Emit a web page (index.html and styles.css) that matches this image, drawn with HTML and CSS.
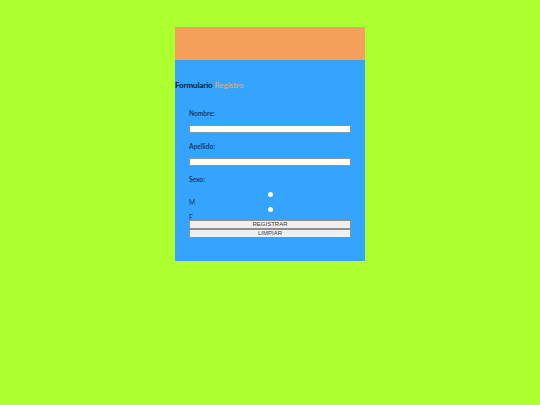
FILE: index.html
```html
<!DOCTYPE html>
<html lang="es">
<head>
<meta charset="utf-8">
<title>Formulario Registro</title>
<link rel="stylesheet" href="styles.css">
</head>
<body>
<div class="card">
  <div class="card-head"></div>
  <div class="card-body">
    <h1 class="title">Formulario <span class="accent">Registro</span></h1>
    <form class="form">
      <label class="lbl lbl-first">Nombre:</label>
      <input class="field" type="text">
      <label class="lbl">Apellido:</label>
      <input class="field" type="text">
      <label class="lbl">Sexo:</label>
      <span class="radio"></span>
      <span class="opt">M</span>
      <span class="radio"></span>
      <span class="opt opt-last">F</span>
      <button type="button" class="btn">REGISTRAR</button>
      <button type="button" class="btn">LIMPIAR</button>
    </form>
  </div>
</div>
</body>
</html>
```

FILE: styles.css
```css
html, body {
  margin: 0;
  padding: 0;
  background: #adff2f;
  height: 100%;
}
body {
  font-family: Lato, "Liberation Sans", sans-serif;
}
.card {
  width: 190px;
  margin: 27px 0 0 175px;
}
.card-head {
  height: 33px;
  background: #f4a05a;
}
.card-body {
  background: #35a4ff;
  padding: 20px 0 23px;
}
.title {
  margin: 0;
  font-size: 8px;
  line-height: 10px;
  font-weight: 700;
  color: #0d1a2a;
  letter-spacing: -0.1px;
}
.accent {
  color: #c0a98c;
  font-weight: 900;
}
.form {
  display: flex;
  flex-direction: column;
  padding: 0 14px;
}
.lbl {
  display: block;
  font-size: 6.6px;
  line-height: 8px;
  height: 8px;
  font-weight: 700;
  color: #173a66;
  margin-top: 9px;
  margin-bottom: 8px;
}
.lbl-first {
  margin-top: 19px;
}
.field {
  box-sizing: border-box;
  height: 8px;
  flex: 0 0 8px;
  width: 100%;
  margin: 0;
  padding: 0;
  border: 0.7px solid #8596a8;
  background: #fff;
}
.radio {
  align-self: center;
  width: 5px;
  height: 5px;
  flex: 0 0 5px;
  border-radius: 50%;
  background: #fff;
  margin: 1.3px 0 0.7px;
}
.opt {
  font-size: 6.6px;
  line-height: 8px;
  color: #173a66;
  height: 8px;
  flex: 0 0 8px;
}
.opt-last {
  height: 7px;
  flex-basis: 7px;
}
.btn {
  box-sizing: border-box;
  height: 9px;
  flex: 0 0 9px;
  width: 100%;
  margin: 0;
  padding: 0;
  font-family: "Liberation Sans", Arial, sans-serif;
  font-size: 6px;
  line-height: 7px;
  color: #3a3a3a;
  background: #efefef;
  border: 0.6px solid #8e8e8e;
  border-radius: 0;
}
```
